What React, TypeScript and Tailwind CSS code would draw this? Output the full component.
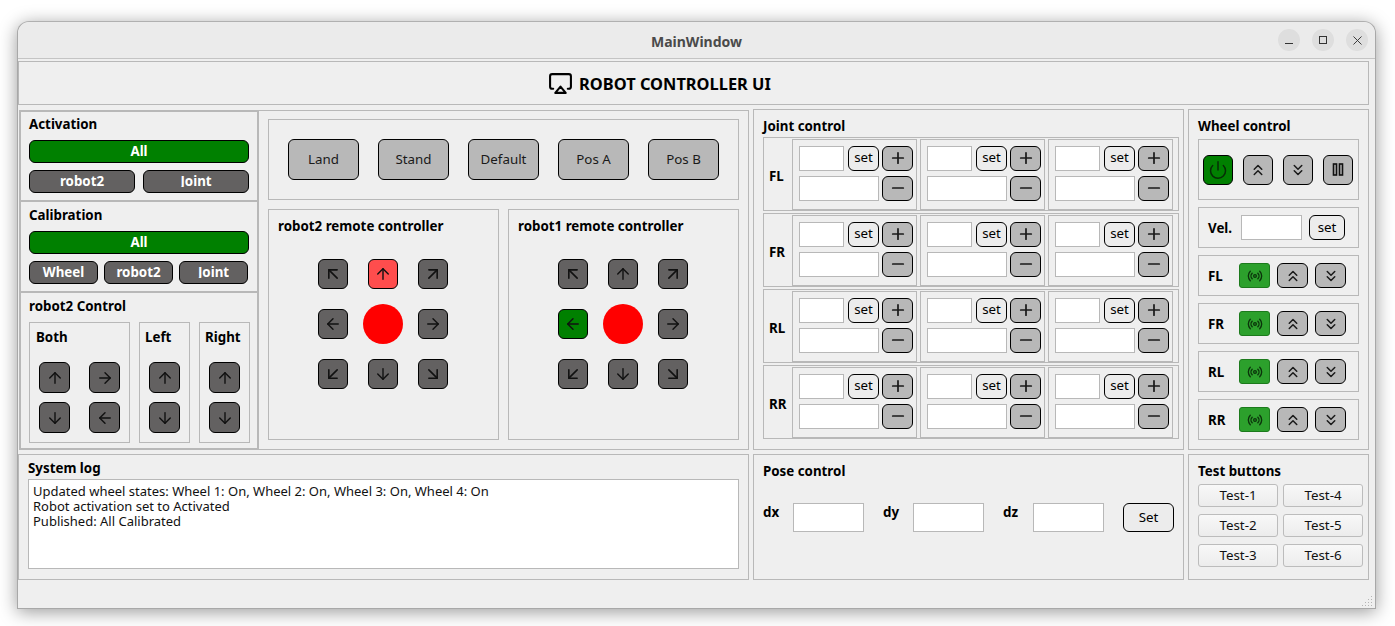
import React from 'react';
import {
  Airplay, ArrowDown, ArrowDownLeft, ArrowDownRight, ArrowLeft, ArrowRight, ArrowUp, ArrowUpLeft, ArrowUpRight,
  ChevronsDown, ChevronsUp, Minus, Plus, Power, Radio, X,
} from 'lucide-react';

const frame = 'border border-[#b8b8b8]';
const title = 'font-bold text-[13.33px] text-black';
const field = 'h-[25px] bg-white border border-[#b8b8b8] outline-none';

const SolidButton = ({ label, className }: { label: React.ReactNode; className: string }) => (
  <button className={`h-[23px] rounded-[6px] border border-black text-white font-bold text-[13.33px] flex items-center justify-center ${className}`}>
    {label}
  </button>
);

// the J loses its hook in the reference, the label is clipped at the baseline
const ClippedJoint = () => (
  <span className="block h-[13px] mb-[2px] leading-[15px] overflow-hidden">Joint</span>
);

const ArrowButton = ({ icon: Icon, size = 18, className = 'bg-[#636161]' }: { icon: typeof ArrowUp; size?: number; className?: string }) => (
  <button className={`w-[30px] h-[30px] rounded-[6px] border border-black flex items-center justify-center ${className}`}>
    <Icon size={size} strokeWidth={1.9} color="#111" />
  </button>
);

const SmallArrow = ({ icon: Icon }: { icon: typeof ArrowUp }) => (
  <button className="w-[31px] h-[31px] rounded-[6px] border border-black bg-[#636161] flex items-center justify-center">
    <Icon size={18} strokeWidth={1.9} color="#111" />
  </button>
);

const GreyIcon = ({ icon: Icon, className, weight = 2 }: { icon: typeof ArrowUp; className: string; weight?: number }) => (
  <button className={`rounded-[6px] border border-black bg-[#b8b8b8] flex items-center justify-center ${className}`}>
    <Icon size={18} strokeWidth={weight} color="#1a1a1a" />
  </button>
);

const Remote = ({ name, upActive, leftActive }: { name: string; upActive?: boolean; leftActive?: boolean }) => (
  <div className={`${frame} w-[231px] h-[231px] flex flex-col pl-[9px]`}>
    <div className={`${title} h-[32px] pt-[2px] flex items-center mb-[17px]`}>{name}</div>
    <div className="ml-[40px] grid grid-cols-[30px_30px_30px] grid-rows-[30px_30px_30px] gap-[20px]">
      <ArrowButton icon={ArrowUpLeft} size={20} />
      <ArrowButton icon={ArrowUp} className={upActive ? 'bg-[#ff4d4d]' : 'bg-[#636161]'} />
      <ArrowButton icon={ArrowUpRight} size={20} />
      <ArrowButton icon={ArrowLeft} className={leftActive ? 'bg-[#008000]' : 'bg-[#636161]'} />
      <div className="w-[40px] h-[40px] -m-[5px] rounded-full bg-[#ff0000]" />
      <ArrowButton icon={ArrowRight} />
      <ArrowButton icon={ArrowDownLeft} size={20} />
      <ArrowButton icon={ArrowDown} />
      <ArrowButton icon={ArrowDownRight} size={20} />
    </div>
  </div>
);

const JointCell = () => (
  <div className={`${frame} w-[125px] h-[71px] pl-[6px] pt-[6px] flex flex-col gap-[5px]`}>
    <div className="flex">
      <input className={`${field} w-[45px]`} />
      <button className="ml-[4px] w-[31px] h-[25px] rounded-[6px] border border-black bg-[#ececec] text-[13.33px] text-black">set</button>
      <GreyIcon icon={Plus} weight={2.3} className="ml-[3px] w-[31px] h-[25px]" />
    </div>
    <div className="flex">
      <input className={`${field} w-[80px]`} />
      <GreyIcon icon={Minus} weight={2.3} className="ml-[3px] w-[31px] h-[25px]" />
    </div>
  </div>
);

const JointRow = ({ label }: { label: string }) => (
  <div className={`${frame} w-[416px] h-[74px] flex items-center pl-[5px]`}>
    <div className="w-[23px] mt-[6px] font-bold text-[13.33px] text-black">{label}</div>
    <div className="flex gap-[3px]">
      <JointCell />
      <JointCell />
      <JointCell />
    </div>
  </div>
);

const WheelRow = ({ label }: { label: string }) => (
  <div className={`${frame} w-[161px] h-[41px] flex items-center pl-[9px]`}>
    <div className="w-[31px] mt-[2px] font-bold text-[13.33px] text-black">{label}</div>
    <button className="w-[31px] h-[25px] rounded-[3px] border border-[#1c7a1c] bg-[#2ca02c] flex items-center justify-center">
      <Radio size={16} strokeWidth={2} color="#0b330b" />
    </button>
    <GreyIcon icon={ChevronsUp} className="ml-[7px] w-[31px] h-[25px]" />
    <GreyIcon icon={ChevronsDown} className="ml-[7px] w-[31px] h-[25px]" />
  </div>
);

const PoseField = ({ label }: { label: string }) => (
  <div className="flex items-center">
    <div className="w-[30px] font-bold text-[13.33px] text-black -mt-[10px]">{label}</div>
    <input className="w-[71px] h-[29px] bg-white border border-[#b8b8b8] outline-none" />
  </div>
);

const TestButton = ({ label }: { label: string }) => (
  <button className="w-[80px] h-[23px] rounded-[3px] border border-[#bcbcbc] bg-gradient-to-b from-[#f8f8f8] to-[#ececec] text-[13.33px] text-[#111]">
    {label}
  </button>
);

const App = () => {
  return (
    <div className="w-[1395px] h-[626px] bg-white pl-[17px] pt-[21px] overflow-hidden" style={{ fontFamily: '"Noto Sans", sans-serif' }}>
      <div className="relative w-[1359px] h-[588px] bg-[#efefef] border border-[#a8a8a8] border-t-[#b0b0b0] rounded-t-[12px] shadow-[0_3px_18px_rgba(0,0,0,0.4)] flex flex-col">
        {/* title bar */}
        <div className="relative h-[37px] shrink-0 bg-[#ebebeb] rounded-t-[12px] border-b border-[#c4c4c4] flex items-center justify-center">
          <span className="font-bold text-[14px] mt-[2px] text-[#4a4a4a]">MainWindow</span>
          <div className="absolute right-[7px] top-[7px] flex gap-[12px]">
            <div className="w-[22px] h-[22px] rounded-full bg-[#dedede] flex items-end justify-center pb-[7px]">
              <div className="w-[8px] h-[1px] bg-[#333]" />
            </div>
            <div className="w-[22px] h-[22px] rounded-full bg-[#dedede] flex items-center justify-center">
              <div className="w-[8px] h-[8px] border border-[#333]" />
            </div>
            <div className="w-[22px] h-[22px] rounded-full bg-[#dedede] flex items-center justify-center">
              <X size={15} strokeWidth={1.5} color="#333" />
            </div>
          </div>
        </div>

        {/* heading */}
        <div className={`${frame} mt-[2px] w-[1351px] h-[44px] pr-[68px] flex items-center justify-center gap-[6px] shrink-0`}>
          <Airplay size={25} strokeWidth={2} color="#000" />
          <span className="font-bold text-[16.4px] mt-[2px] text-black">ROBOT CONTROLLER UI</span>
        </div>

        {/* upper row */}
        <div className="mt-[4px] flex items-start shrink-0">
          <div className="ml-[1px] mt-[1px] w-[240px] h-[340px] flex flex-col">
            <div className="h-[92px] border-2 border-[#b8b8b8] pl-[8px] flex flex-col">
              <div className={`${title} h-[28px] flex items-center pb-[2px]`}>Activation</div>
              <SolidButton label="All" className="w-[220px] bg-[#008000]" />
              <div className="mt-[7px] flex gap-[8px]">
                <SolidButton label="robot2" className="w-[106px] bg-[#636161]" />
                <SolidButton label={<ClippedJoint />} className="w-[106px] bg-[#636161]" />
              </div>
            </div>
            <div className="h-[91px] border-x-2 border-b-2 border-[#b8b8b8] pl-[8px] flex flex-col">
              <div className={`${title} h-[29px] flex items-center pb-[1px]`}>Calibration</div>
              <SolidButton label="All" className="w-[220px] bg-[#008000]" />
              <div className="mt-[7px] flex gap-[6px]">
                <SolidButton label="Wheel" className="w-[69px] bg-[#636161]" />
                <SolidButton label="robot2" className="w-[69px] bg-[#636161]" />
                <SolidButton label={<ClippedJoint />} className="w-[69px] bg-[#636161]" />
              </div>
            </div>
            <div className="h-[157px] border-x-2 border-b-2 border-[#b8b8b8] pl-[8px] flex flex-col">
              <div className={`${title} h-[29px] flex items-center pb-[1px]`}>robot2 Control</div>
              <div className="flex gap-[9px]">
                <div className={`${frame} w-[101px] h-[121px] pl-[9px] flex flex-col`}>
                  <div className={`${title} -ml-[3px] h-[29px] flex items-center mb-[10px]`}>Both</div>
                  <div className="grid grid-cols-[31px_31px] gap-x-[19px] gap-y-[9px]">
                    <SmallArrow icon={ArrowUp} />
                    <SmallArrow icon={ArrowRight} />
                    <SmallArrow icon={ArrowDown} />
                    <SmallArrow icon={ArrowLeft} />
                  </div>
                </div>
                <div className={`${frame} w-[51px] h-[121px] pl-[9px] flex flex-col`}>
                  <div className={`${title} -ml-[4px] h-[29px] flex items-center mb-[10px]`}>Left</div>
                  <div className="flex flex-col gap-[9px]">
                    <SmallArrow icon={ArrowUp} />
                    <SmallArrow icon={ArrowDown} />
                  </div>
                </div>
                <div className={`${frame} w-[51px] h-[121px] pl-[9px] flex flex-col`}>
                  <div className={`${title} -ml-[4px] h-[29px] flex items-center mb-[10px]`}>Right</div>
                  <div className="flex flex-col gap-[9px]">
                    <SmallArrow icon={ArrowUp} />
                    <SmallArrow icon={ArrowDown} />
                  </div>
                </div>
              </div>
            </div>
          </div>

          <div className="-ml-[1px] mt-[1px] w-[491px] h-[340px] border-t border-r border-b border-[#b8b8b8] pl-[10px] pt-[8px] flex flex-col gap-[9px]">
            <div className={`${frame} w-[471px] h-[81px] pl-[19px] flex items-center gap-[19px]`}>
              {['Land', 'Stand', 'Default', 'Pos A', 'Pos B'].map((name) => (
                <button key={name} className="w-[71px] h-[41px] rounded-[6px] border border-black bg-[#b8b8b8] text-[13.33px] text-[#1a1a1a]">
                  {name}
                </button>
              ))}
            </div>
            <div className="flex gap-[9px]">
              <Remote name="robot2 remote controller" upActive />
              <Remote name="robot1 remote controller" leftActive />
            </div>
          </div>

          <div className={`${frame} ml-[4px] w-[431px] h-[341px] pl-[9px] flex flex-col`}>
            <div className={`${title} h-[27px] flex items-center pt-[7px]`}>Joint control</div>
            <div className="flex flex-col gap-[2px]">
              <JointRow label="FL" />
              <JointRow label="FR" />
              <JointRow label="RL" />
              <JointRow label="RR" />
            </div>
          </div>

          <div className={`${frame} ml-[4px] w-[181px] h-[341px] pl-[9px] flex flex-col`}>
            <div className={`${title} h-[29px] flex items-center pt-[5px]`}>Wheel control</div>
            <div className="flex flex-col gap-[7px]">
              <div className={`${frame} w-[161px] h-[61px] pl-[4px] flex items-center gap-[10px]`}>
                <button className="w-[30px] h-[30px] rounded-[6px] border border-black bg-[#008000] flex items-center justify-center">
                  <Power size={20} strokeWidth={1.8} color="#062d06" />
                </button>
                <GreyIcon icon={ChevronsUp} className="w-[30px] h-[30px]" />
                <GreyIcon icon={ChevronsDown} className="w-[30px] h-[30px]" />
                <button className="w-[30px] h-[30px] rounded-[6px] border border-black bg-[#b8b8b8] flex items-center justify-center">
                  <svg width="12" height="13" viewBox="0 0 12 13" fill="none" stroke="#111" strokeWidth="1.6">
                    <rect x="1.5" y="1" width="3" height="11" />
                    <rect x="7.5" y="1" width="3" height="11" />
                  </svg>
                </button>
              </div>
              <div className={`${frame} w-[161px] h-[41px] pl-[9px] flex items-center`}>
                <div className="w-[33px] mt-[2px] font-bold text-[13.33px] text-black">Vel.</div>
                <input className={`${field} w-[61px]`} />
                <button className="ml-[7px] w-[36px] h-[25px] rounded-[6px] border border-black bg-[#ececec] text-[13.33px] text-black">set</button>
              </div>
              <WheelRow label="FL" />
              <WheelRow label="FR" />
              <WheelRow label="RL" />
              <WheelRow label="RR" />
            </div>
          </div>
        </div>

        {/* lower row */}
        <div className="mt-[4px] flex shrink-0">
          <div className={`${frame} w-[731px] h-[126px] pl-[9px] flex flex-col`}>
            <div className={`${title} h-[24px] flex items-center pt-[3px]`}>System log</div>
            <div className="w-[711px] h-[90px] bg-white border border-[#b8b8b8] px-[4px] pt-[4px] text-[13px] leading-[15px] text-[#111]">
              <div>Updated wheel states: Wheel 1: On, Wheel 2: On, Wheel 3: On, Wheel 4: On</div>
              <div>Robot activation set to Activated</div>
              <div>Published: All Calibrated</div>
            </div>
          </div>

          <div className={`${frame} ml-[4px] w-[431px] h-[126px] pl-[9px] flex flex-col`}>
            <div className={`${title} h-[32px] flex items-center pt-[1px]`}>Pose control</div>
            <div className="mt-[16px] flex items-center gap-[19px]">
              <PoseField label="dx" />
              <PoseField label="dy" />
              <PoseField label="dz" />
              <button className="w-[51px] h-[29px] rounded-[6px] border border-black bg-[#ececec] text-[13.33px] text-black">Set</button>
            </div>
          </div>

          <div className={`${frame} ml-[4px] w-[181px] h-[126px] pl-[9px] flex flex-col`}>
            <div className={`${title} h-[29px] flex items-center pt-[5px]`}>Test buttons</div>
            <div className="grid grid-cols-[80px_80px] gap-x-[5px] gap-y-[7px]">
              <TestButton label="Test-1" />
              <TestButton label="Test-4" />
              <TestButton label="Test-2" />
              <TestButton label="Test-5" />
              <TestButton label="Test-3" />
              <TestButton label="Test-6" />
            </div>
          </div>
        </div>

        {/* resize grip */}
        <svg className="absolute right-[1px] bottom-[1px]" width="12" height="12" viewBox="0 0 12 12" fill="#b4b4b4">
          <rect x="9" y="1" width="1" height="1" />
          <rect x="6" y="4" width="1" height="1" />
          <rect x="9" y="4" width="1" height="1" />
          <rect x="3" y="7" width="1" height="1" />
          <rect x="6" y="7" width="1" height="1" />
          <rect x="9" y="7" width="1" height="1" />
          <rect x="0" y="10" width="1" height="1" />
          <rect x="3" y="10" width="1" height="1" />
          <rect x="6" y="10" width="1" height="1" />
          <rect x="9" y="10" width="1" height="1" />
        </svg>
      </div>
    </div>
  );
};

export default App;
